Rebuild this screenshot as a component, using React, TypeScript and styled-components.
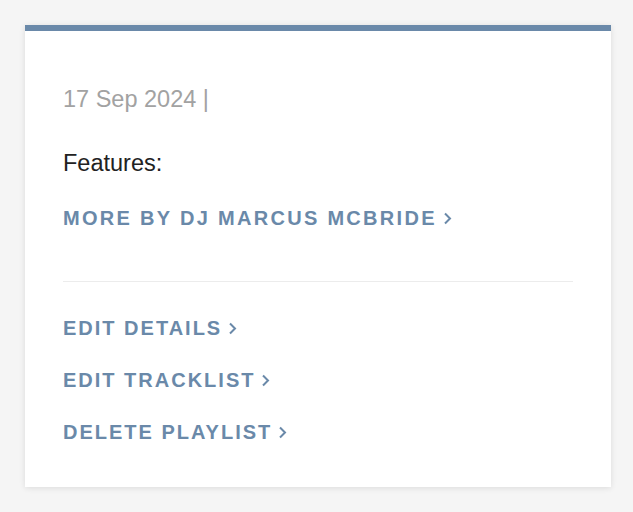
import React from "react";
import styled, { createGlobalStyle } from "styled-components";

const Global = createGlobalStyle`
  html, body { margin: 0; padding: 0; background: #f5f5f5; }
  body { font-family: "Liberation Sans", Arial, Helvetica, sans-serif; }
`;

const Page = styled.div`
  padding: 25px 22px 25px 25px;
`;

const Card = styled.section`
  width: 586px;
  box-sizing: border-box;
  background: #ffffff;
  border-top: 6px solid #6a89a9;
  box-shadow: 0 1px 6px rgba(0, 0, 0, 0.11);
  padding: 52px 38px 42px 38px;
`;

const DateLine = styled.div`
  font-size: 23.5px;
  line-height: 32px;
  color: #a2a2a2;
`;

const Features = styled.div`
  margin-top: 32px;
  font-size: 23.5px;
  line-height: 32px;
  color: #222;
`;

const LinkList = styled.div<{ $gap?: number }>`
  display: flex;
  flex-direction: column;
  align-items: flex-start;
  gap: ${(p) => p.$gap ?? 0}px;
`;

const ActionLink = styled.a<{ $spacing?: number }>`
  display: inline-flex;
  align-items: center;
  gap: 6px;
  font-size: 20px;
  line-height: 26px;
  font-weight: 700;
  letter-spacing: ${(p) => p.$spacing ?? 2}px;
  text-transform: uppercase;
  color: #6a89a9;
  text-decoration: none;
  cursor: pointer;
`;

const TopLinks = styled.div`
  margin-top: 26px;
`;

const Divider = styled.hr`
  border: 0;
  border-top: 1px solid #ececec;
  margin: 50px 0 33px 0;
`;

const Chevron = () => (
  <svg width="9" height="13" viewBox="0 0 9 13" fill="none">
    <path d="M2 1.5 L7 6.5 L2 11.5" stroke="#6a89a9" strokeWidth="2" />
  </svg>
);

export default function App() {
  return (
    <>
      <Global />
      <Page>
        <Card>
          <DateLine>17 Sep 2024 |</DateLine>
          <Features>Features:</Features>
          <TopLinks>
            <ActionLink $spacing={2.3}>
              More by DJ Marcus McBride <Chevron />
            </ActionLink>
          </TopLinks>
          <Divider />
          <LinkList $gap={26}>
            <ActionLink>
              Edit details <Chevron />
            </ActionLink>
            <ActionLink>
              Edit tracklist <Chevron />
            </ActionLink>
            <ActionLink>
              Delete playlist <Chevron />
            </ActionLink>
          </LinkList>
        </Card>
      </Page>
    </>
  );
}
